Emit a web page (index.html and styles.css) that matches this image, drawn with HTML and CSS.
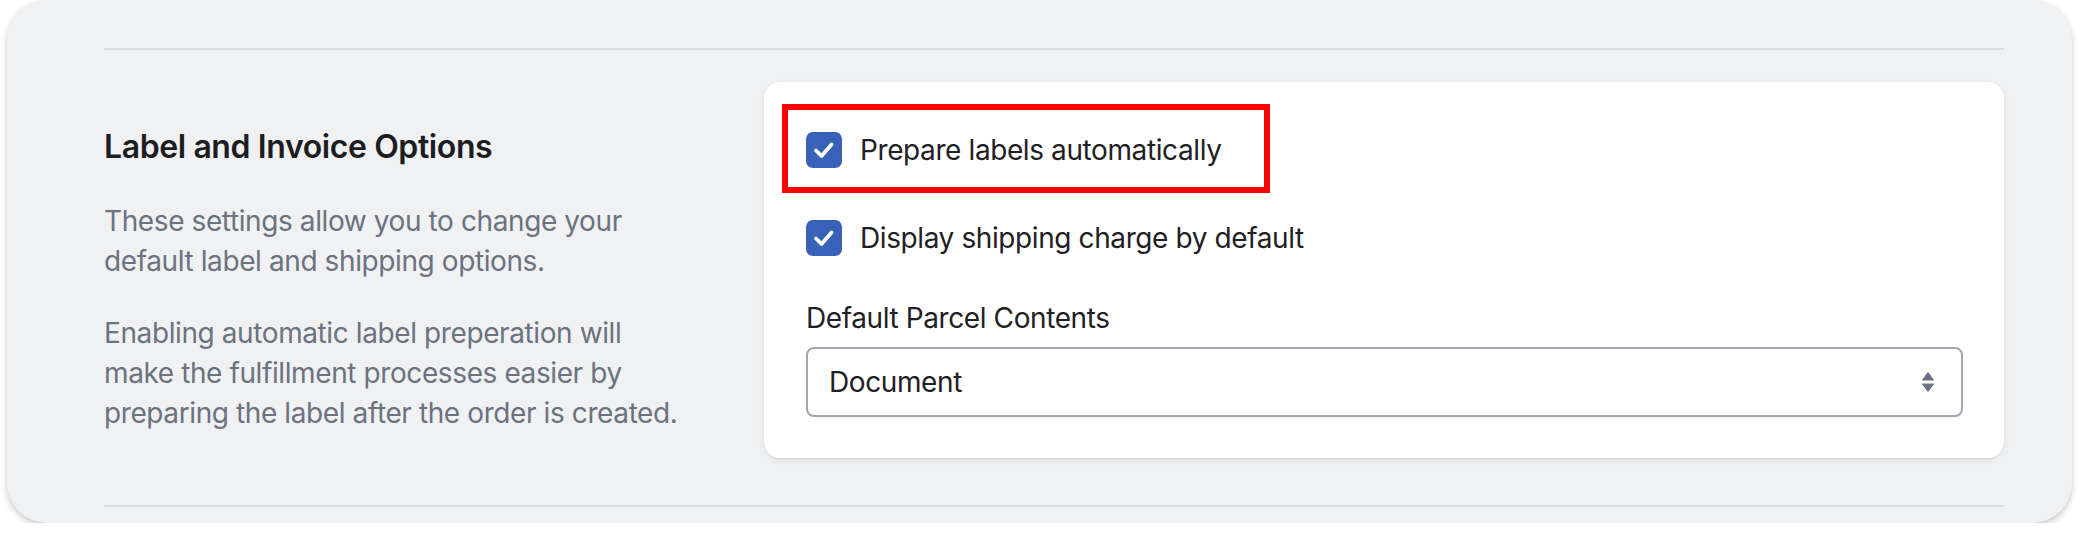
FILE: index.html
```html
<!doctype html>
<html lang="en">
<head>
	<meta charset="UTF-8">
	<title>Label and Invoice Options</title>
	<link rel="stylesheet" href="styles.css">
</head>
<body>
<div class="panel">
	<div class="rule"></div>

	<div class="section">
		<div class="intro">
			<h3>Label and Invoice Options</h3>
			<p>These settings allow you to change your default label and shipping options.</p>
			<p>Enabling automatic label preperation will make the fulfillment processes easier by preparing the label after the order is created.</p>
		</div>

		<form class="card">
			<div class="highlight"></div>

			<label class="check">
				<span class="box">
					<svg width="36" height="36" viewBox="0 0 36 36"><path d="M10 18.5l5.5 5.5 10-11.5" fill="none" stroke="#fff" stroke-width="3.8" stroke-linecap="round" stroke-linejoin="round"/></svg>
				</span>
				Prepare labels automatically
			</label>

			<label class="check">
				<span class="box">
					<svg width="36" height="36" viewBox="0 0 36 36"><path d="M10 18.5l5.5 5.5 10-11.5" fill="none" stroke="#fff" stroke-width="3.8" stroke-linecap="round" stroke-linejoin="round"/></svg>
				</span>
				Display shipping charge by default
			</label>

			<div class="field">
				<label for="contents">Default Parcel Contents</label>
				<div class="select-wrap">
					<select id="contents" name="contents">
						<option value="document">Document</option>
						<option value="merchandise">Merchandise</option>
						<option value="gift">Gift</option>
					</select>
					<svg class="arrows" width="14" height="22" viewBox="0 0 14 22"><path d="M7 1.5l5.5 7.5h-11z M7 20.5l5.5-7.5h-11z" fill="#6b7280" stroke="#6b7280" stroke-width="1" stroke-linejoin="round"/></svg>
				</div>
			</div>
		</form>
	</div>

	<div class="rule"></div>
</div>
</body>
</html>
```

FILE: styles.css
```css
body{
	margin: 0;
	background: #fff;
	font-family: Inter, "Noto Sans", sans-serif;
	letter-spacing: -0.4px;
}
.panel{
	margin-left: 7px;
	width: 2065px;
	height: 523px;
	box-sizing: border-box;
	padding: 48px 68px 0 97px;
	background: #f0f1f3;
	border-radius: 40px;
	box-shadow: 0 3px 6px rgba(0,0,0,0.22);
}
.rule{
	height: 2px;
	background: #dcdde1;
}
.section{
	display: grid;
	grid-template-columns: 612px 1fr;
	align-items: start;
	gap: 48px;
	padding: 32px 0 47px;
}
.intro{
	padding-top: 41px;
	width: 590px;
}
.intro h3{
	margin: 0;
	font-size: 32px;
	line-height: 48px;
	font-weight: 600;
	color: #1c1d21;
}
.intro p{
	margin: 30px 0 0;
	font-size: 28px;
	line-height: 40px;
	color: #6b7280;
}
.intro p + p{
	margin-top: 32px;
}
.card{
	position: relative;
	background: #fff;
	border-radius: 16px;
	padding: 48px 41px 41px 42px;
	box-shadow: 0 2px 6px rgba(0,0,0,0.08), 0 1px 2px rgba(0,0,0,0.05);
}
.highlight{
	position: absolute;
	left: 18px;
	top: 22px;
	width: 488px;
	height: 89px;
	box-sizing: border-box;
	border: 6px solid #ff0000;
}
.check{
	display: flex;
	align-items: center;
	gap: 18px;
	height: 40px;
	font-size: 28px;
	line-height: 40px;
	color: #1f2023;
}
.check + .check{
	margin-top: 48px;
}
.box{
	width: 36px;
	height: 36px;
	border-radius: 7px;
	background: #3762b7;
}
.box svg{
	display: block;
}
.field{
	margin-top: 40px;
}
.field label{
	display: block;
	font-size: 28px;
	line-height: 40px;
	color: #1f2023;
}
.select-wrap{
	position: relative;
	margin-top: 9px;
}
select{
	display: block;
	width: 100%;
	height: 70px;
	box-sizing: border-box;
	appearance: none;
	-webkit-appearance: none;
	background: #fff;
	border: 2px solid #a3a7af;
	border-radius: 8px;
	padding: 0 24px 0 21px;
	font-family: Inter, "Noto Sans", sans-serif;
	font-size: 28px;
	letter-spacing: -0.4px;
	color: #1f2023;
	box-shadow: 0 1px 2px rgba(0,0,0,0.05);
}
.arrows{
	position: absolute;
	right: 28px;
	top: 24px;
	pointer-events: none;
}
```
